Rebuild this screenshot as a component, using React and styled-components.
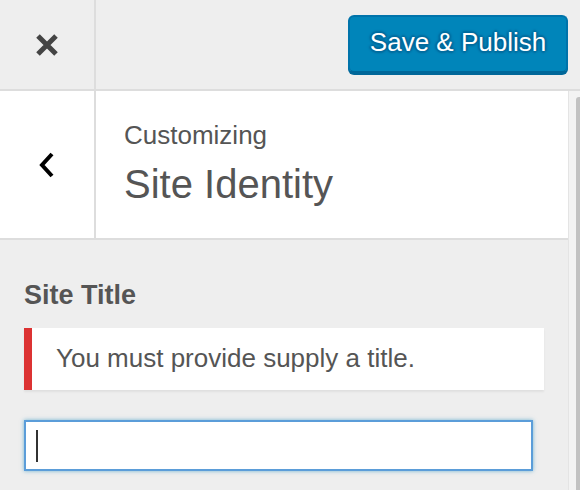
import React from "react";
import styled, { createGlobalStyle } from "styled-components";

const Global = createGlobalStyle`
  html, body { margin: 0; padding: 0; background: #eeeeee; }
  body { font-family: "Liberation Sans", Arial, sans-serif; -webkit-font-smoothing: antialiased; }
  * { box-sizing: border-box; }
`;

const Page = styled.div`
  width: 580px;
  height: 490px;
  overflow: hidden;
  display: flex;
  flex-direction: column;
  background: #eeeeee;
`;

const TopBar = styled.div`
  height: 91px;
  flex: none;
  display: flex;
  align-items: stretch;
  background: #eeeeee;
  border-bottom: 2px solid #dddddd;
`;

const IconCell = styled.div`
  width: 96px;
  flex: none;
  display: flex;
  align-items: center;
  justify-content: center;
  border-right: 2px solid #dddddd;
  color: ${(p) => p.$color};
`;

const Actions = styled.div`
  flex: 1;
  display: flex;
  align-items: center;
  justify-content: flex-end;
  padding: 0 12px 2px 0;
`;

const PublishButton = styled.button`
  width: 220px;
  height: 58px;
  font-family: inherit;
  font-size: 26px;
  color: #ffffff;
  background: #0085ba;
  border: 2px solid #0073aa;
  border-bottom-color: #006799;
  border-radius: 6px;
  box-shadow: 0 2px 0 #006799;
  text-shadow: 0 -2px 2px #006799, 2px 0 2px #006799, 0 2px 2px #006799, -2px 0 2px #006799;
  padding: 0 0 2px;
  cursor: pointer;
`;

const Body = styled.div`
  flex: 1;
  display: flex;
  min-height: 0;
`;

const Panel = styled.div`
  flex: 1;
  display: flex;
  flex-direction: column;
`;

const ScrollTrack = styled.div`
  width: 12px;
  flex: none;
  background: #f3f3f3;
  border-left: 1px solid #e4e4e4;
  display: flex;
  justify-content: flex-end;
  padding-top: 6px;
`;

const ScrollThumb = styled.div`
  width: 4px;
  height: 100%;
  background: #c2c2c2;
  border-top-left-radius: 3px;
`;

const SectionHeader = styled.div`
  height: 149px;
  flex: none;
  display: flex;
  background: #ffffff;
  border-bottom: 2px solid #dddddd;
`;

const TitleBlock = styled.div`
  display: flex;
  flex-direction: column;
  justify-content: center;
  padding: 0 0 4px 28px;
`;

const Action = styled.span`
  font-size: 26px;
  line-height: 34px;
  color: #555555;
`;

const SectionTitle = styled.h3`
  margin: 8px 0 0;
  font-size: 40px;
  line-height: 48px;
  font-weight: 400;
  color: #555555;
`;

const Content = styled.div`
  padding: 38px 24px 0 24px;
  display: flex;
  flex-direction: column;
`;

const ControlTitle = styled.span`
  font-size: 27px;
  font-weight: 700;
  line-height: 34px;
  color: #555555;
`;

const Notice = styled.div`
  margin-top: 16px;
  height: 62px;
  display: flex;
  align-items: center;
  padding: 0 24px 2px;
  background: #ffffff;
  border-left: 8px solid #dc3232;
  box-shadow: 0 2px 2px rgba(0, 0, 0, 0.06);
  font-size: 26px;
  color: #555555;
`;

const Field = styled.div`
  margin-top: 30px;
  width: 509px;
  height: 51px;
  display: flex;
  align-items: center;
  padding-left: 10px;
  background: #ffffff;
  border: 2px solid #5b9dd9;
  box-shadow: 0 0 4px rgba(30, 140, 190, 0.6);
`;

const Caret = styled.span`
  width: 2px;
  height: 32px;
  background: #333333;
`;

const CloseIcon = () => (
  <svg width="24" height="24" viewBox="0 0 24 24">
    <path d="M3 3 L21 21 M21 3 L3 21" stroke="currentColor" strokeWidth="5" strokeLinecap="butt" />
  </svg>
);

const BackIcon = () => (
  <svg width="16" height="26" viewBox="0 0 16 26">
    <path d="M13 2 L3 13 L13 24" stroke="currentColor" strokeWidth="4" fill="none" />
  </svg>
);

export default function App() {
  return (
    <Page>
      <Global />
      <TopBar>
        <IconCell $color="#444444">
          <CloseIcon />
        </IconCell>
        <Actions>
          <PublishButton>Save &amp; Publish</PublishButton>
        </Actions>
      </TopBar>
      <Body>
        <Panel>
          <SectionHeader>
            <IconCell $color="#000000">
              <BackIcon />
            </IconCell>
            <TitleBlock>
              <Action>Customizing</Action>
              <SectionTitle>Site Identity</SectionTitle>
            </TitleBlock>
          </SectionHeader>
          <Content>
            <ControlTitle>Site Title</ControlTitle>
            <Notice>You must provide supply a title.</Notice>
            <Field>
              <Caret />
            </Field>
          </Content>
        </Panel>
        <ScrollTrack>
          <ScrollThumb />
        </ScrollTrack>
      </Body>
    </Page>
  );
}
